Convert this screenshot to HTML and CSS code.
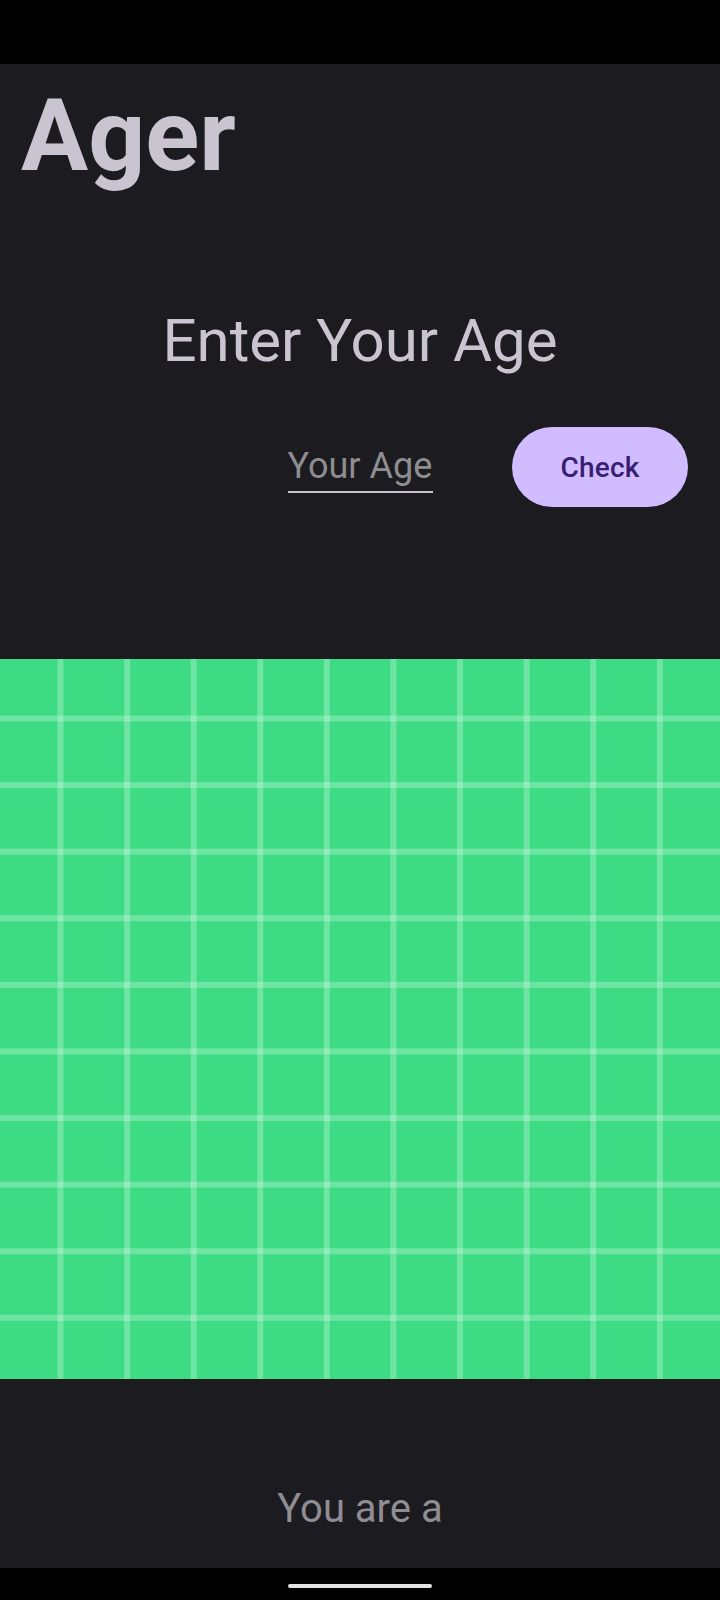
FILE: index.html
```html
<!DOCTYPE html>
<html>
<head>
<meta charset="utf-8">
<link rel="stylesheet" href="styles.css">
</head>
<body>
<div class="screen">
  <div class="status-bar"></div>
  <main class="content">
    <h1 class="app-title">Ager</h1>
    <h2 class="prompt">Enter Your Age</h2>
    <div class="input-row">
      <div class="age-field"><span class="hint">Your Age</span></div>
      <button class="check-btn">Check</button>
    </div>
    <div class="grid-image"></div>
    <p class="result">You are a</p>
  </main>
  <div class="nav-bar"><div class="nav-handle"></div></div>
</div>
</body>
</html>
```

FILE: styles.css
```css
html, body {
  margin: 0;
  padding: 0;
  background: #1c1b1f;
}

.screen {
  width: 720px;
  height: 1600px;
  display: flex;
  flex-direction: column;
  background: #1c1b1f;
  font-family: Roboto, "Noto Sans", sans-serif;
  overflow: hidden;
}

.status-bar {
  height: 64px;
  flex: none;
  background: #000;
}

.content {
  flex: 1;
  display: flex;
  flex-direction: column;
}

.app-title {
  margin: 13px 0 0 0;
  padding-left: 21px;
  font-size: 100px;
  line-height: 118px;
  font-weight: 700;
  color: #cac4d0;
}

.prompt {
  margin: 111px 0 0 0;
  text-align: center;
  font-size: 60px;
  line-height: 70px;
  font-weight: 400;
  color: #cac4d0;
}

.input-row {
  margin-top: 51px;
  height: 80px;
  display: grid;
  grid-template-columns: 1fr auto 1fr;
  align-items: start;
}

.age-field {
  grid-column: 2;
  width: 145px;
  margin-top: 17px;
  padding-bottom: 3px;
  border-bottom: 2px solid #cac4d0;
  font-size: 36px;
  line-height: 44px;
}

.hint {
  color: #8e8d90;
}

.check-btn {
  grid-column: 3;
  justify-self: end;
  margin-right: 32px;
  width: 176px;
  height: 80px;
  border: none;
  border-radius: 40px;
  background: #d0bcff;
  color: #381e72;
  font-family: Roboto, "Noto Sans", sans-serif;
  font-size: 28px;
  font-weight: 500;
  letter-spacing: 0.2px;
  padding: 0;
}

.grid-image {
  margin-top: 152px;
  height: 720px;
  flex: none;
  background-color: #3ddc84;
  background-image:
    linear-gradient(to right, rgba(255,255,255,0.25) 5.5px, transparent 5.5px),
    linear-gradient(to bottom, rgba(255,255,255,0.25) 5.5px, transparent 5.5px);
  background-size: 66.6px 66.6px, 66.6px 66.6px;
  background-position: 57.5px 0, 0 56.5px;
}

.result {
  margin: 106px 0 0 0;
  text-align: center;
  font-size: 40px;
  line-height: 48px;
  color: #8f8d93;
}

.nav-bar {
  height: 32px;
  flex: none;
  background: #000;
  display: flex;
  justify-content: center;
}

.nav-handle {
  margin-top: 16px;
  width: 144px;
  height: 4px;
  border-radius: 2px;
  background: #e3e3e3;
}
```
